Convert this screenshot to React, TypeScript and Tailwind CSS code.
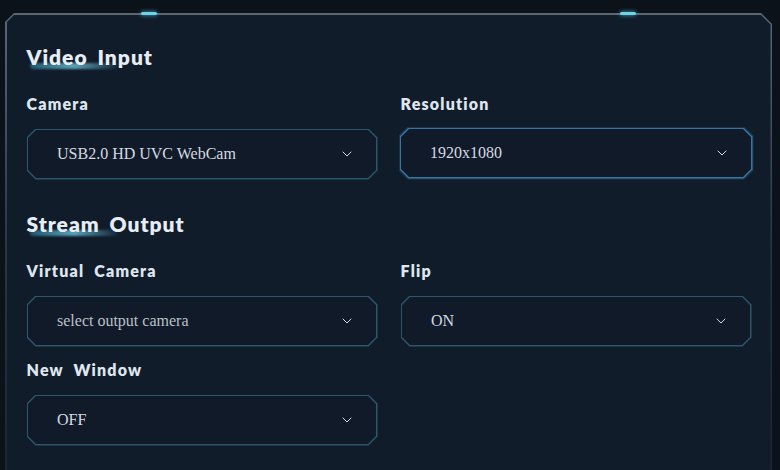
import { ChevronDown } from 'lucide-react'

const chamfer =
  '[clip-path:polygon(9px_0,calc(100%-9px)_0,100%_9px,100%_calc(100%-9px),calc(100%-9px)_100%,9px_100%,0_calc(100%-9px),0_9px)]'
const chamferInner =
  '[clip-path:polygon(8px_0,calc(100%-8px)_0,100%_8px,100%_calc(100%-8px),calc(100%-8px)_100%,8px_100%,0_calc(100%-8px),0_8px)]'

interface SelectProps {
  value: string
  muted?: boolean
  focused?: boolean
}

function Select({ value, muted, focused }: SelectProps) {
  const box = (
    <div className={`${chamfer} ${focused ? 'bg-[#3676a0]' : 'bg-[#2b5769]'} p-[1.5px]`}>
      <div
        className={`${chamferInner} flex h-[48px] items-center justify-between bg-[#111a29] pl-[29px] pr-[21px]`}
      >
        <span
          className={`font-['Liberation_Serif',serif] text-[16px] ${muted ? 'text-[#b9c0c8]' : 'text-[#d5dbe1]'}`}
        >
          {value}
        </span>
        <ChevronDown size={16} strokeWidth={1.5} className="text-[#d5dbe1]" />
      </div>
    </div>
  )
  if (!focused) return box
  return <div className={`-m-[2px] ${chamfer} bg-[#1a3248] p-[1px]`}>{box}</div>
}

function Heading({ children }: { children: string }) {
  const [first, ...rest] = children.split(' ')
  return (
    <h2 className="relative h-[28px] font-['Lato',sans-serif] text-[21px] font-extrabold leading-[28px] tracking-[1px] text-[#e6edf3] [word-spacing:4px]">
      <span className="absolute left-[3px] top-[20px] h-[6px] w-[88px] rounded-full bg-gradient-to-r from-[#1f5870] via-[#5aa2b8] to-[#2a6d85]/10 blur-[1px]" />
      <span className="relative">{first}</span> <span className="relative">{rest.join(' ')}</span>
    </h2>
  )
}

function Field({ label, children }: { label: string; children: React.ReactNode }) {
  return (
    <div className="flex flex-col">
      <div className="mb-[15px] h-[20px] font-['Lato',sans-serif] text-[16px] font-extrabold leading-[20px] tracking-[1.2px] text-[#dfe6ed] [word-spacing:5px]">
        {label}
      </div>
      {children}
    </div>
  )
}

export default function App() {
  return (
    <div className="h-[470px] w-[780px] overflow-hidden bg-[#0c121a] pl-[5px] pr-[8px] pt-[13px]">
      <div className="relative h-[470px]">
        <div className="h-full bg-gradient-to-b from-[#5b6874] via-[#2a3542] to-[#1b2532] pl-[1.5px] pr-[1.5px] pt-[1.5px] [clip-path:polygon(9px_0,calc(100%-11px)_0,100%_11px,100%_100%,0_100%,0_9px)]">
          <div className="h-full bg-[#111c2b] pl-[20px] pr-[19px] pt-[28px] [clip-path:polygon(8px_0,calc(100%-10px)_0,100%_10px,100%_100%,0_100%,0_8px)]">
            <Heading>Video Input</Heading>
            <div className="mt-[23px] grid grid-cols-2 gap-x-[23px]">
              <Field label="Camera">
                <Select value="USB2.0 HD UVC WebCam" />
              </Field>
              <Field label="Resolution">
                <Select value="1920x1080" focused />
              </Field>
            </div>

            <div className="mt-[30px]">
              <Heading>Stream Output</Heading>
            </div>
            <div className="mt-[23px] grid grid-cols-2 gap-x-[23px] gap-y-[13px]">
              <Field label="Virtual Camera">
                <Select value="select output camera" muted />
              </Field>
              <Field label="Flip">
                <Select value="ON" />
              </Field>
              <Field label="New Window">
                <Select value="OFF" />
              </Field>
            </div>
          </div>
        </div>
        <span className="absolute left-[136px] top-[-1px] h-[3px] w-[16px] rounded-full bg-[#6fd3ea] shadow-[0_0_4px_#4fb8d6]" />
        <span className="absolute left-[615px] top-[-1px] h-[3px] w-[16px] rounded-full bg-[#6fd3ea] shadow-[0_0_4px_#4fb8d6]" />
      </div>
    </div>
  )
}
